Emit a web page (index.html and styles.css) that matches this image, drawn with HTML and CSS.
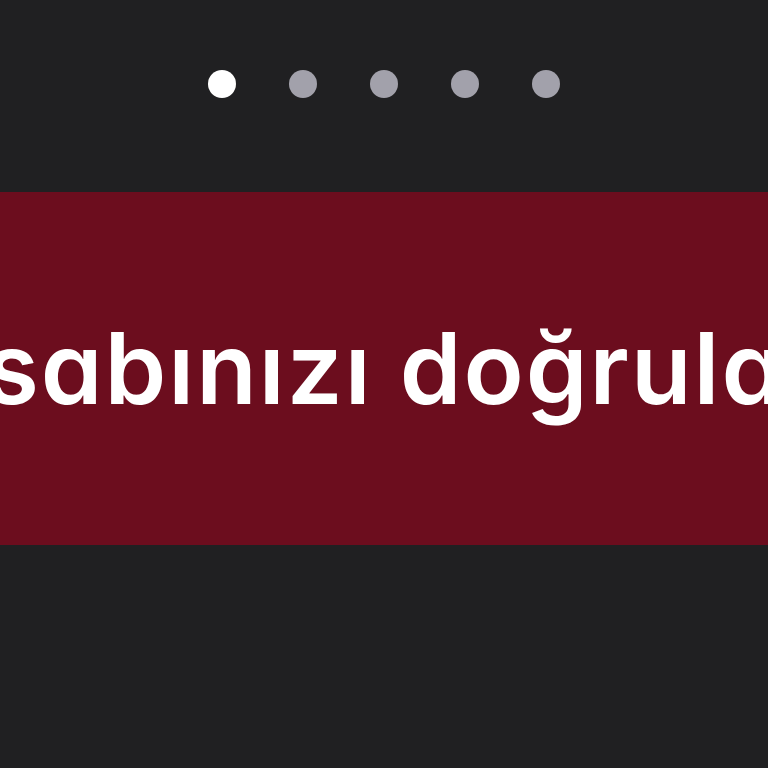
FILE: index.html
```html
<!DOCTYPE html>
<html lang="tr">
<head>
<meta charset="utf-8">
<link rel="stylesheet" href="styles.css">
</head>
<body>
<div class="screen">
  <div class="dots">
    <span class="dot active"></span>
    <span class="dot"></span>
    <span class="dot"></span>
    <span class="dot"></span>
    <span class="dot"></span>
  </div>
  <div class="band">
    <div class="title">Hesabınızı doğrulayın</div>
  </div>
</div>
</body>
</html>
```
FILE: styles.css
```css
html, body {
  margin: 0;
  padding: 0;
  background: #202022;
}
.screen {
  width: 768px;
  height: 768px;
  display: flex;
  flex-direction: column;
  overflow: hidden;
  background: #202022;
}
.dots {
  display: flex;
  justify-content: center;
  gap: 53px;
  padding-top: 70px;
  height: 28px;
}
.dot {
  width: 28px;
  height: 28px;
  border-radius: 50%;
  background: #a2a1ab;
}
.dot.active {
  background: #ffffff;
}
.band {
  margin-top: 94px;
  height: 353px;
  background: #6c0d1e;
  display: flex;
  justify-content: center;
  align-items: center;
  overflow: hidden;
}
.title {
  flex: none;
  white-space: nowrap;
  color: #ffffff;
  font-family: Inter, "Noto Sans", sans-serif;
  font-feature-settings: "cv11" 1;
  font-weight: 600;
  font-size: 99px;
  letter-spacing: 2px;
  line-height: 1;
  margin-left: 16px;
}
```
